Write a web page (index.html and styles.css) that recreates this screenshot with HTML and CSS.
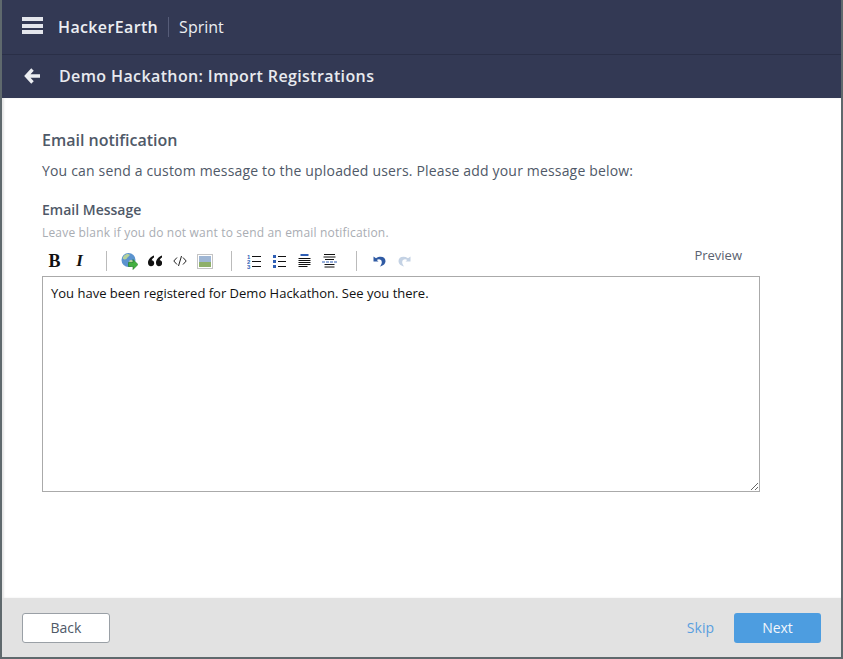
FILE: index.html
```html
<!DOCTYPE html>
<html lang="en">
<head>
<meta charset="utf-8">
<title>Import Registrations</title>
<link rel="stylesheet" href="styles.css">
</head>
<body>
<div class="window">
  <header class="topbar">
    <div class="burger"><span></span><span></span><span></span></div>
    <span class="brand">HackerEarth</span>
    <span class="product">Sprint</span>
  </header>
  <div class="subbar">
    <svg class="back" width="17" height="16" viewBox="0 0 17 16"><path d="M8.500 1.500 2.500 8l6 6.500M3 8H16" fill="none" stroke="#eceef2" stroke-width="3.400"/></svg>
    <h1 class="title">Demo Hackathon: Import Registrations</h1>
  </div>
  <main class="content">
    <h2 class="heading">Email notification</h2>
    <p class="desc">You can send a custom message to the uploaded users. Please add your message below:</p>
    <div class="label">Email Message</div>
    <div class="hint">Leave blank if you do not want to send an email notification.</div>
    <div class="toolbar">
      <div class="tools">
        <span class="tool tool-b">B</span>
        <span class="tool tool-i">I</span>
        <span class="sep"></span>
        <span class="tool"><svg width="17" height="18" viewBox="0 0 17 18"><circle cx="7.500" cy="8" r="7" fill="#5b93cf"/><path d="M2.500 4.500c2-3 5-3 6-2s-1 2-2 3-1 2-3 2-2-2-1-3zM8.500 8.500c2-1 3.500 0 3.500 1s-2 3-3 4c-1 0-1-3-.5-5z" fill="#b5d19a"/><path d="M7.500 10.500H12V7.500l5 5-5 5v-3H7.500z" fill="#43b040" stroke="#1f7a20" stroke-width=".6"/></svg></span>
        <span class="tool"><svg width="14" height="12" viewBox="0 0 14 12"><path d="M6 .5C2.500 1.800 0 4.500 0 7.800c0 2.200 1.300 3.400 3 3.400S6.200 10 6.200 8.200 5 5.300 3.700 5.300C3.900 4.300 4.900 3.100 6 2.500zM14 .5C10.500 1.800 8 4.500 8 7.800c0 2.200 1.300 3.400 3 3.400s3.200-1.200 3.200-3-1.200-2.900-2.500-2.900c.2-1 1.200-2.200 2.300-2.800z" fill="#111"/></svg></span>
        <span class="tool"><svg width="14" height="12" viewBox="0 0 14 12"><path d="M4 2.500.8 6 4 9.500M10 2.500 13.200 6 10 9.500M8.500 1l-3 10" fill="none" stroke="#222" stroke-width="1"/></svg></span>
        <span class="tool"><svg width="16" height="15" viewBox="0 0 16 15"><rect x=".5" y=".5" width="15" height="14" fill="#fff" stroke="#c4c4c4"/><rect x="2" y="2" width="12" height="6" fill="#9fb6d4"/><rect x="2" y="8" width="12" height="5" fill="#8fb06a"/></svg></span>
        <span class="sep"></span>
        <span class="tool"><svg width="15" height="15" viewBox="0 0 15 15"><g class="num"><text x="0" y="5">1</text><text x="0" y="10">2</text><text x="0" y="15">3</text></g><path d="M5 2.500h9M5 7.500h9M5 12.500h9" stroke="#111"/></svg></span>
        <span class="tool"><svg width="15" height="15" viewBox="0 0 15 15"><g fill="#2f5fb5"><rect x="1" y="1" width="3" height="3"/><rect x="1" y="6" width="3" height="3"/><rect x="1" y="11" width="3" height="3"/></g><path d="M6 2.500h8M6 7.500h8M6 12.500h8" stroke="#111"/></svg></span>
        <span class="tool"><svg width="13" height="15" viewBox="0 0 13 15"><rect x="2.500" y="0" width="8" height="2" fill="#2f5fb5"/><path d="M.5 4.500h12M.5 6.500h12M.5 8.500h12M.5 10.500h12M.5 12.500h9" stroke="#111"/></svg></span>
        <span class="tool"><svg width="15" height="15" viewBox="0 0 15 15"><path d="M2 .5h11M1.500 3h12M3 5.500h9M2.500 10.500h10M2.500 13h10" stroke="#111"/><path d="M0 8h15" stroke="#2f5fb5" stroke-dasharray="3 1"/></svg></span>
        <span class="sep"></span>
        <span class="tool"><svg width="13" height="11" viewBox="0 0 13 11"><path d="M.5.500v5h5L3.800 4c1.800-1.300 5-.8 5 2.200 0 1.600-1 3.200-2 4.300C9.800 10 12.500 8 12.500 5 12.500 1 7.500-.5 3 2.200z" fill="#2f5aa3"/></svg></span>
        <span class="tool"><svg width="13" height="11" viewBox="0 0 13 11"><path d="M12.500.500v5h-5L9.200 4c-1.800-1.300-5-.8-5 2.200 0 1.600 1 3.200 2 4.300C3.200 10 .5 8 .5 5 .5 1 5.500-.5 10 2.200z" fill="#c4d2e4"/></svg></span>
      </div>
      <span class="preview">Preview</span>
    </div>
    <textarea class="editor">You have been registered for Demo Hackathon. See you there.</textarea>
  </main>
  <footer class="footer">
    <button class="btn btn-back">Back</button>
    <div class="footer-right">
      <a class="skip">Skip</a>
      <button class="btn btn-next">Next</button>
    </div>
  </footer>
</div>
</body>
</html>
```

FILE: styles.css
```css
* { box-sizing: border-box; }
html, body { margin: 0; height: 100%; }
body { font-family: "Open Sans", sans-serif; background: #fff; overflow: hidden; }
.window {
  height: 659px;
  display: flex;
  flex-direction: column;
  border-left: 2px solid #5f696d;
  border-right: 2px solid #5f696d;
  border-bottom: 2px solid #5f696d;
}
.topbar {
  height: 55px;
  background: #333954;
  border-bottom: 1px solid #2a2f47;
  display: flex;
  align-items: center;
  padding: 0 0 0 20px;
  color: #eceef2;
}
.burger { width: 21px; display: flex; flex-direction: column; gap: 2.500px; margin: 0 15px 3px 0; }
.burger span { height: 4px; background: #e4e6ec; }
.brand { font-size: 16px; font-weight: 600; letter-spacing: .36px; padding-right: 10px; border-right: 1px solid #565c78; line-height: 20px; }
.product { font-size: 16px; padding-left: 10px; line-height: 20px; }
.subbar {
  height: 43px;
  background: #333954;
  display: flex;
  align-items: center;
  padding: 0 0 2px 22px;
}
.back { margin-right: 18px; }
.title { margin: 0; font-size: 16px; font-weight: 600; color: #e8eaef; letter-spacing: .38px; }
.content { flex: 1; padding: 31px 0 0 40px; box-shadow: inset 2px 0 2px rgba(0, 0, 0, .1); }
.heading { margin: 0; font-size: 16px; font-weight: 600; color: #4f5968; line-height: 22px; }
.desc { margin: 9px 0 0; font-size: 14px; letter-spacing: .17px; color: #4f5968; line-height: 22px; }
.label { margin-top: 18px; font-size: 14px; font-weight: 600; color: #4f5968; line-height: 20px; }
.hint { margin-top: 4px; font-size: 12px; letter-spacing: .18px; color: #a9adb3; line-height: 18px; }
.toolbar { display: flex; justify-content: space-between; align-items: flex-start; width: 718px; height: 32px; margin-top: 2px; }
.tools { display: flex; align-items: center; height: 34px; }
.tool { width: 25px; height: 26px; display: flex; align-items: center; justify-content: center; flex: none; }
.tool-b, .tool-i { font-family: "Liberation Serif", serif; font-size: 18px; color: #111; line-height: 26px; }
.tool-b { font-weight: 700; }
.tool-i { font-size: 17px; font-weight: 700; font-style: italic; }
.sep { width: 1px; height: 20px; background: #bbb; margin: 0 10px 0 14px; }
.num { font: 700 6px "Liberation Sans", sans-serif; fill: #2f5fb5; }
.preview { font-size: 13px; color: #5a6270; margin-right: 18px; line-height: 18px; margin-top: 2px; }
.editor {
  display: block;
  width: 718px;
  height: 216px;
  margin: 0;
  border: 1px solid #aaa;
  padding: 7px 8px;
  font-family: "Open Sans", sans-serif;
  font-size: 13px;
  line-height: 18px;
  color: #111;
  outline: none;
}
.footer {
  height: 59px;
  background: #e2e2e2;
  display: flex;
  align-items: center;
  justify-content: space-between;
  padding: 0 20px;
}
.footer-right { display: flex; align-items: center; gap: 20px; }
.btn { width: 88px; height: 30px; border-radius: 3px; font-family: "Open Sans", sans-serif; font-size: 14px; padding: 0; }
.btn-back { background: #fff; border: 1px solid #9aa0a6; color: #4f5968; }
.btn-next { width: 87px; background: #4d9de0; border: none; color: #f2f6fb; }
.skip { font-size: 14px; color: #5a9fdf; }
```
